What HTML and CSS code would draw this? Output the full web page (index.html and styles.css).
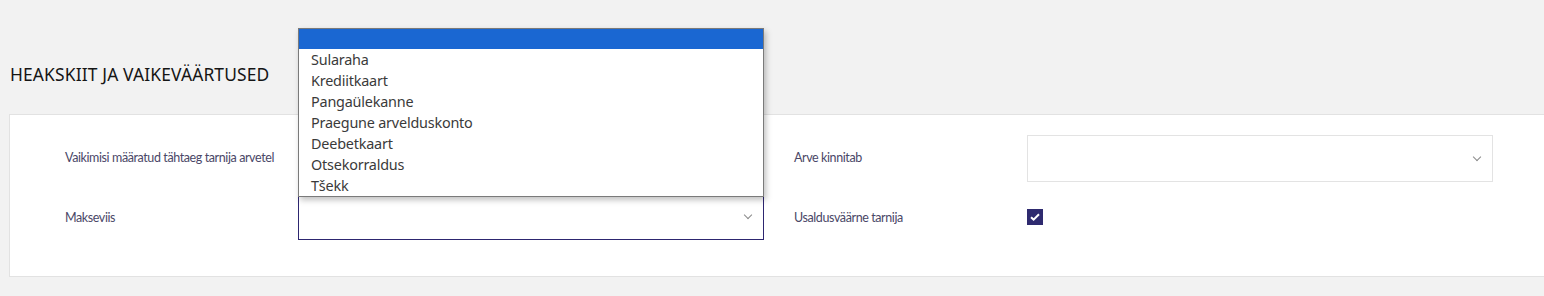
FILE: index.html
```html
<!DOCTYPE html>
<html lang="et">
<head>
<meta charset="utf-8">
<title>Heakskiit ja vaikeväärtused</title>
<link rel="stylesheet" href="styles.css">
</head>
<body>
<div class="page">
  <h2 class="section-title">HEAKSKIIT JA VAIKEVÄÄRTUSED</h2>
  <div class="card">
    <div class="form-grid">
      <label class="field-label">Vaikimisi määratud tähtaeg tarnija arvetel</label>
      <div class="select select-plain"><span class="chev"></span></div>
      <label class="field-label">Arve kinnitab</label>
      <div class="select select-plain"><span class="chev"></span></div>

      <label class="field-label">Makseviis</label>
      <div class="select select-focus"><span class="chev"></span></div>
      <label class="field-label">Usaldusväärne tarnija</label>
      <div class="check-cell">
        <span class="checkbox">
          <svg width="10" height="8" viewBox="0 0 10 8"><path d="M1 4.2 L3.6 6.6 L9 1.2" fill="none" stroke="#fff" stroke-width="2"/></svg>
        </span>
      </div>
    </div>
  </div>
  <ul class="dropdown">
    <li class="opt opt-active"></li>
    <li class="opt">Sularaha</li>
    <li class="opt">Krediitkaart</li>
    <li class="opt">Pangaülekanne</li>
    <li class="opt">Praegune arvelduskonto</li>
    <li class="opt">Deebetkaart</li>
    <li class="opt">Otsekorraldus</li>
    <li class="opt">Tšekk</li>
  </ul>
</div>
</body>
</html>
```
FILE: styles.css
```css
html, body {
  margin: 0;
  padding: 0;
  background: #f2f2f2;
  overflow: hidden;
}
body {
  width: 1544px;
  height: 296px;
  font-family: "Noto Sans", "Open Sans", sans-serif;
}
.page {
  position: relative;
  padding: 0 0 0 9px;
}
.section-title {
  margin: 0;
  padding: 60px 0 26px 1px;
  font-weight: 400;
  font-size: 17.4px;
  line-height: 28px;
  color: #151515;
  letter-spacing: 0.15px;
}
.card {
  width: 1600px;
  height: 163px;
  box-sizing: border-box;
  background: #fff;
  border: 1px solid #e2e2e2;
  padding: 20px 0 0 55px;
}
.form-grid {
  display: grid;
  grid-template-columns: 233px 466px 30px 233px 466px;
  grid-template-rows: 47px 46px;
  row-gap: 12px;
  align-items: center;
}
.form-grid > :nth-child(3),
.form-grid > :nth-child(7) {
  grid-column: 4;
}
.form-grid > :nth-child(4),
.form-grid > :nth-child(8) {
  grid-column: 5;
}
.field-label {
  font-family: Lato, "Noto Sans", sans-serif;
  font-size: 12.5px;
  letter-spacing: -0.4px;
  color: #4a4767;
  white-space: nowrap;
}
.form-grid > :nth-child(1),
.form-grid > :nth-child(3) {
  margin-top: -3px;
}
.select {
  position: relative;
  height: 100%;
  box-sizing: border-box;
  background: #fff;
}
.select-plain {
  border: 1px solid #e3e3e3;
}
.select-focus {
  border: 1px solid #2d2670;
}
.chev {
  position: absolute;
  right: 12px;
  top: 50%;
  width: 5px;
  height: 5px;
  margin-top: -5px;
  border-right: 1.3px solid #8a8a8a;
  border-bottom: 1.3px solid #8a8a8a;
  transform: rotate(45deg);
}
.check-cell {
  display: flex;
  align-items: center;
}
.checkbox {
  display: flex;
  align-items: center;
  justify-content: center;
  width: 16px;
  height: 16px;
  background: #2e2a6f;
}
.dropdown {
  position: absolute;
  left: 298px;
  top: 28px;
  width: 466px;
  box-sizing: border-box;
  margin: 0;
  padding: 0;
  list-style: none;
  background: #fff;
  border: 1px solid #7a7a7a;
  box-shadow: 2px 3px 6px rgba(0, 0, 0, 0.25);
}
.opt {
  height: 21px;
  line-height: 21px;
  padding-left: 12px;
  font-size: 14.4px;
  color: #3a3a3a;
  letter-spacing: -0.2px;
}
.opt-active {
  height: 20px;
  background: #1a67d2;
}
```
